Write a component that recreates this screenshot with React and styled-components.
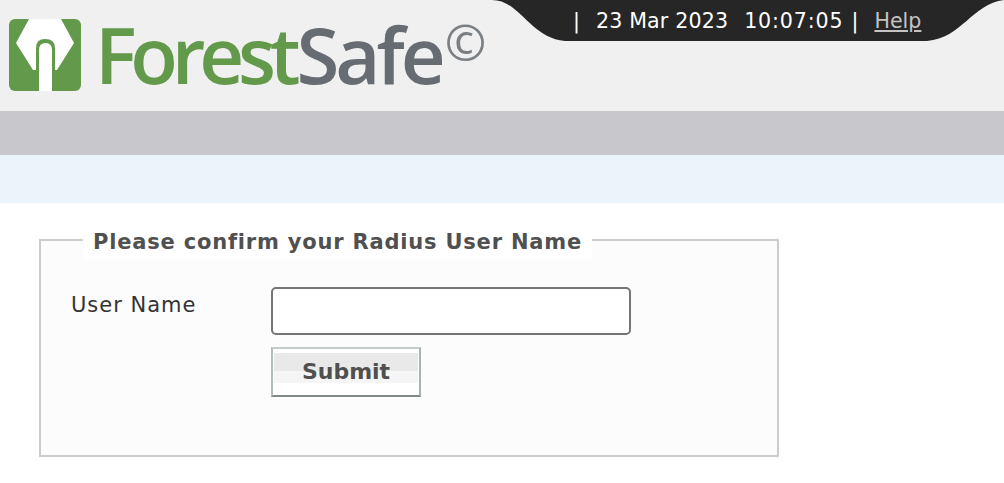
import React from "react";
import styled, { createGlobalStyle } from "styled-components";

const Global = createGlobalStyle`
  html, body { margin: 0; padding: 0; background: #fff; }
  body { font-family: "DejaVu Sans", Verdana, sans-serif; overflow: hidden; }
`;
const Page = styled.div`width: 1004px; height: 483px; overflow: hidden; background: #fff;`;
const Header = styled.header`
  height: 111px; background: #f0f0f0; display: flex; align-items: flex-start;
`;
const Logo = styled.div`width: 492px; flex: none; box-sizing: border-box; display: flex; align-items: flex-start; padding: 19px 0 0 9px; filter: blur(0.5px);`;
const LogoMark = styled.svg`width: 72px; height: 72px; display: block; flex: none;`;
const Wordmark = styled.div`
  margin: -1px 0 0 14px; display: flex; align-items: flex-start;
  font-family: "Open Sans", sans-serif; font-size: 78px; font-weight: 600; line-height: 72px; white-space: nowrap;
`;
const Green = styled.span`color: #62994a; letter-spacing: -6.2px;`;
const Slate = styled.span`color: #666c72; letter-spacing: -4px; margin-left: 2px;`;
const Copy = styled.span`color: #7b8085; font-size: 50px; font-weight: 400; line-height: 52px; letter-spacing: 0; margin: -2px 0 0 3px;`;
const Tab = styled.div`
  position: relative; width: 512px; height: 41px; flex: none;
  display: flex; align-items: flex-start;
  padding: 8px 0 0 81px; box-sizing: border-box;
  font-size: 20.6px; line-height: 27px; color: #fff; white-space: pre;
`;
const TabShape = styled.svg`position: absolute; inset: 0; width: 512px; height: 41px; display: block;`;
const TabText = styled.span`
  position: relative; margin-left: ${(p) => p.$gap || 0}px; letter-spacing: ${(p) => p.$tracking || 0}px;
`;
const HelpLink = styled.a`position: relative; margin-left: 16px; color: #c4c4c4; text-decoration: underline;`;
const GreyBar = styled.div`height: 44px; background: #c8c7cc;`;
const BlueBar = styled.div`height: 48px; background: #ebf3fb;`;
const Main = styled.main`padding: 18px 0 0 39px;`;
const Panel = styled.fieldset`
  width: 740px; height: 236px; box-sizing: border-box; margin: 0; padding: 0 0 0 30px; min-width: 0;
  border: 2px solid #ccc; background: #fcfcfc;
`;
const Legend = styled.legend`
  margin-left: 12px; padding: 8px 10px 4px; background: #fff;
  font-size: 21px; line-height: 26px; font-weight: 700; color: #505050; white-space: nowrap; letter-spacing: 0.8px;
`;
const FormRow = styled.div`display: grid; grid-template-columns: 200px 360px; margin-top: 28px; row-gap: 12px;`;
const Label = styled.label`font-size: 21px; line-height: 36px; color: #333; letter-spacing: 1px;`;
const Input = styled.input`
  width: 360px; height: 48px; box-sizing: border-box; border: 2px solid #757575; border-radius: 5px; background: #fff; margin: 0; padding: 0 8px;
`;
const Submit = styled.button`
  grid-column: 2; width: 150px; height: 50px; box-sizing: border-box; padding: 0 0 2px; margin: 0;
  border: 2px solid; border-color: #c3cccb #a9b4b2 #808b89 #b3bdbb;
  background: linear-gradient(#fff 0 4px, #e9e9e9 4px 22px, #f5f5f5 22px 34px, #fff 34px);
  background-origin: padding-box;
  box-shadow: inset 0 0 0 1px #fff;
  font-family: "DejaVu Sans", sans-serif; font-weight: 700; font-size: 22px; color: #505050;
`;

export default function App() {
  return (
    <Page>
      <Global />
      <Header>
        <Logo>
          <LogoMark viewBox="0 0 72 72">
            <rect width="72" height="72" rx="6" fill="#62994a" />
            <path d="M20 0H52L65 24L48 51H24L7 24Z" fill="#fff" />
            <path d="M27 72V29Q27 20 36 20Q46 20 46 29V72Z" fill="#62994a" />
            <path d="M30 72V31Q30 24 36.5 24Q43 24 43 31V72Z" fill="#fff" />
          </LogoMark>
          <Wordmark>
            <Green>Forest</Green>
            <Slate>Safe</Slate>
            <Copy>©</Copy>
          </Wordmark>
        </Logo>
        <Tab>
          <TabShape viewBox="0 0 512 41">
            <path d="M0 0 C28 0 38 38 73 41 H435 C470 38 480 4 512 0 Z" fill="#262626" />
          </TabShape>
          <TabText>|</TabText>
          <TabText $gap={16} $tracking={0.15}>23 Mar 2023</TabText>
          <TabText $gap={16} $tracking={0.85}>10:07:05</TabText>
          <TabText $gap={8}>|</TabText>
          <HelpLink href="#">Help</HelpLink>
        </Tab>
      </Header>
      <GreyBar />
      <BlueBar />
      <Main>
        <Panel>
          <Legend>Please confirm your Radius User Name</Legend>
          <FormRow>
            <Label>User Name</Label>
            <Input type="text" />
            <Submit type="button">Submit</Submit>
          </FormRow>
        </Panel>
      </Main>
    </Page>
  );
}
